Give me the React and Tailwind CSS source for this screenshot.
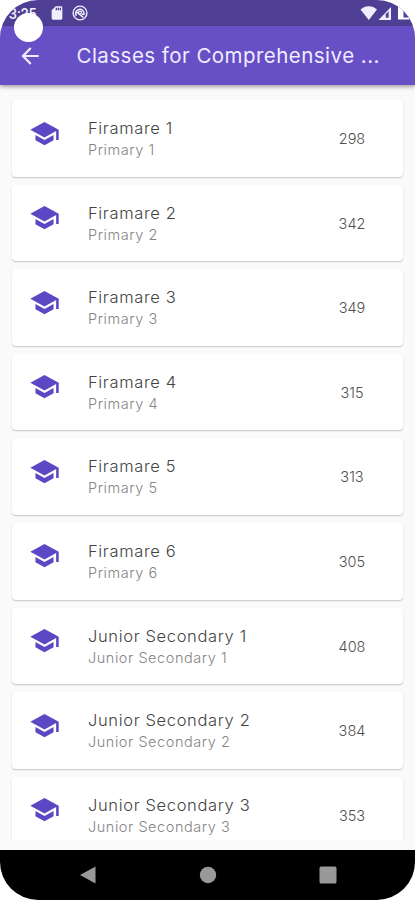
import React from 'react';
import { MdArrowBack, MdSchool, MdSdCard } from 'react-icons/md';

const classes = [
  { name: 'Firamare 1', level: 'Primary 1', count: 298 },
  { name: 'Firamare 2', level: 'Primary 2', count: 342 },
  { name: 'Firamare 3', level: 'Primary 3', count: 349 },
  { name: 'Firamare 4', level: 'Primary 4', count: 315 },
  { name: 'Firamare 5', level: 'Primary 5', count: 313 },
  { name: 'Firamare 6', level: 'Primary 6', count: 305 },
  { name: 'Junior Secondary 1', level: 'Junior Secondary 1', count: 408 },
  { name: 'Junior Secondary 2', level: 'Junior Secondary 2', count: 384 },
  { name: 'Junior Secondary 3', level: 'Junior Secondary 3', count: 353 },
];

const StatusBar = () => (
  <div className="h-[26px] shrink-0 bg-[#4e3f94] flex items-start text-[#f1eefb]">
    <span className="ml-[9px] mt-[5px] w-[29px] text-[14px] leading-[18px] font-medium font-[Roboto,sans-serif]">3:25</span>
    <MdSdCard size={16} className="ml-[11px] mt-[5px]" />
    <svg className="ml-[7px] mt-[5px]" width="16" height="16" viewBox="0 0 16 16" fill="none" stroke="currentColor">
      <circle cx="8" cy="8" r="6.9" strokeWidth="1.4" />
      <path d="M4.3 10.8A4.2 4.2 0 1 1 12 9.2H9.8M4.4 7l7 5.4" strokeWidth="1.5" />
      <circle cx="8" cy="7.6" r="1.5" strokeWidth="1.2" />
    </svg>
    <div className="flex-1" />
    <svg className="mt-[5px] w-[55px] h-[17px]" viewBox="0 0 55 17" fill="currentColor">
      <path d="M0.5 4.5C5 0 12.5 0 17 4.5L8.8 15Z" />
      <path d="M18.5 15L31 2V15Z" />
      <path d="M25.8 12.8V9.2L28.6 6.3V12.8Z" fill="#4e3f94" />
      <path d="M38 1H43.5V12.5H49V14.5H38Z" fill="#fff" />
      <path d="M47 3L55 11V0H44Z" fill="#fff" />
    </svg>
  </div>
);

const AppBar = () => (
  <header className="relative z-10 h-[58.5px] shrink-0 bg-[#674fc6] flex items-center text-[#f0ecff] shadow-[0_2px_4px_rgba(0,0,0,0.35)]">
    <MdArrowBack size={26} className="ml-[17px] mt-[1px]" />
    <h1 className="ml-[33.5px] mt-[1px] text-[20.5px] leading-7 tracking-[0.46px] whitespace-nowrap">
      Classes for Comprehensive ...
    </h1>
  </header>
);

const ClassCard = ({ item }) => (
  <li className="h-[76.6px] shrink-0 bg-white rounded-[4px] flex shadow-[0_1px_1.5px_rgba(0,0,0,0.22)]">
    <MdSchool size={31} className="ml-[17px] mt-[17.5px] shrink-0 text-[#5d47c4]" />
    <div className="ml-[28px] mt-[17px] flex-1 whitespace-nowrap">
      <p className="text-[16.5px] leading-[22px] font-light tracking-[0.65px] text-[#444]">{item.name}</p>
      <p className="text-[14.5px] leading-[22px] font-light tracking-[0.55px] text-[#858585]">{item.level}</p>
    </div>
    <span className="mt-[28px] mr-[31px] w-10 text-center text-[14.5px] leading-[22px] font-light text-[#505050]">{item.count}</span>
  </li>
);

const NavBar = () => (
  <nav className="h-[50px] shrink-0 bg-black flex pl-[78.5px] gap-[102px] pt-[16px]">
    <svg width="18" height="18" viewBox="0 0 18 18" fill="#999">
      <path d="M1 9L16.5 0.5V17.5Z" />
    </svg>
    <svg width="18" height="18" viewBox="0 0 18 18" fill="#999">
      <circle cx="9" cy="9" r="8.2" />
    </svg>
    <svg width="18" height="18" viewBox="0 0 18 18" fill="#999">
      <rect x="0.5" y="0.5" width="17" height="17" rx="1.5" />
    </svg>
  </nav>
);

const App = () => {
  return (
    <div className="relative w-[415px] h-[900px] bg-white font-[Inter,sans-serif]">
      <div className="h-full rounded-[38px] overflow-hidden flex flex-col bg-[#fafafa]">
        <StatusBar />
        <AppBar />
        <ul className="h-[755.5px] shrink-0 overflow-hidden px-3 pt-[15.5px] flex flex-col gap-2">
          {classes.map((item) => (
            <ClassCard key={item.name} item={item} />
          ))}
        </ul>
        <div className="flex-1" />
        <NavBar />
      </div>

      {/* Camera cutout */}
      <div className="absolute z-20 left-[14px] top-[13px] w-[29px] h-[29px] rounded-full bg-white" />
    </div>
  );
};

export default App;
